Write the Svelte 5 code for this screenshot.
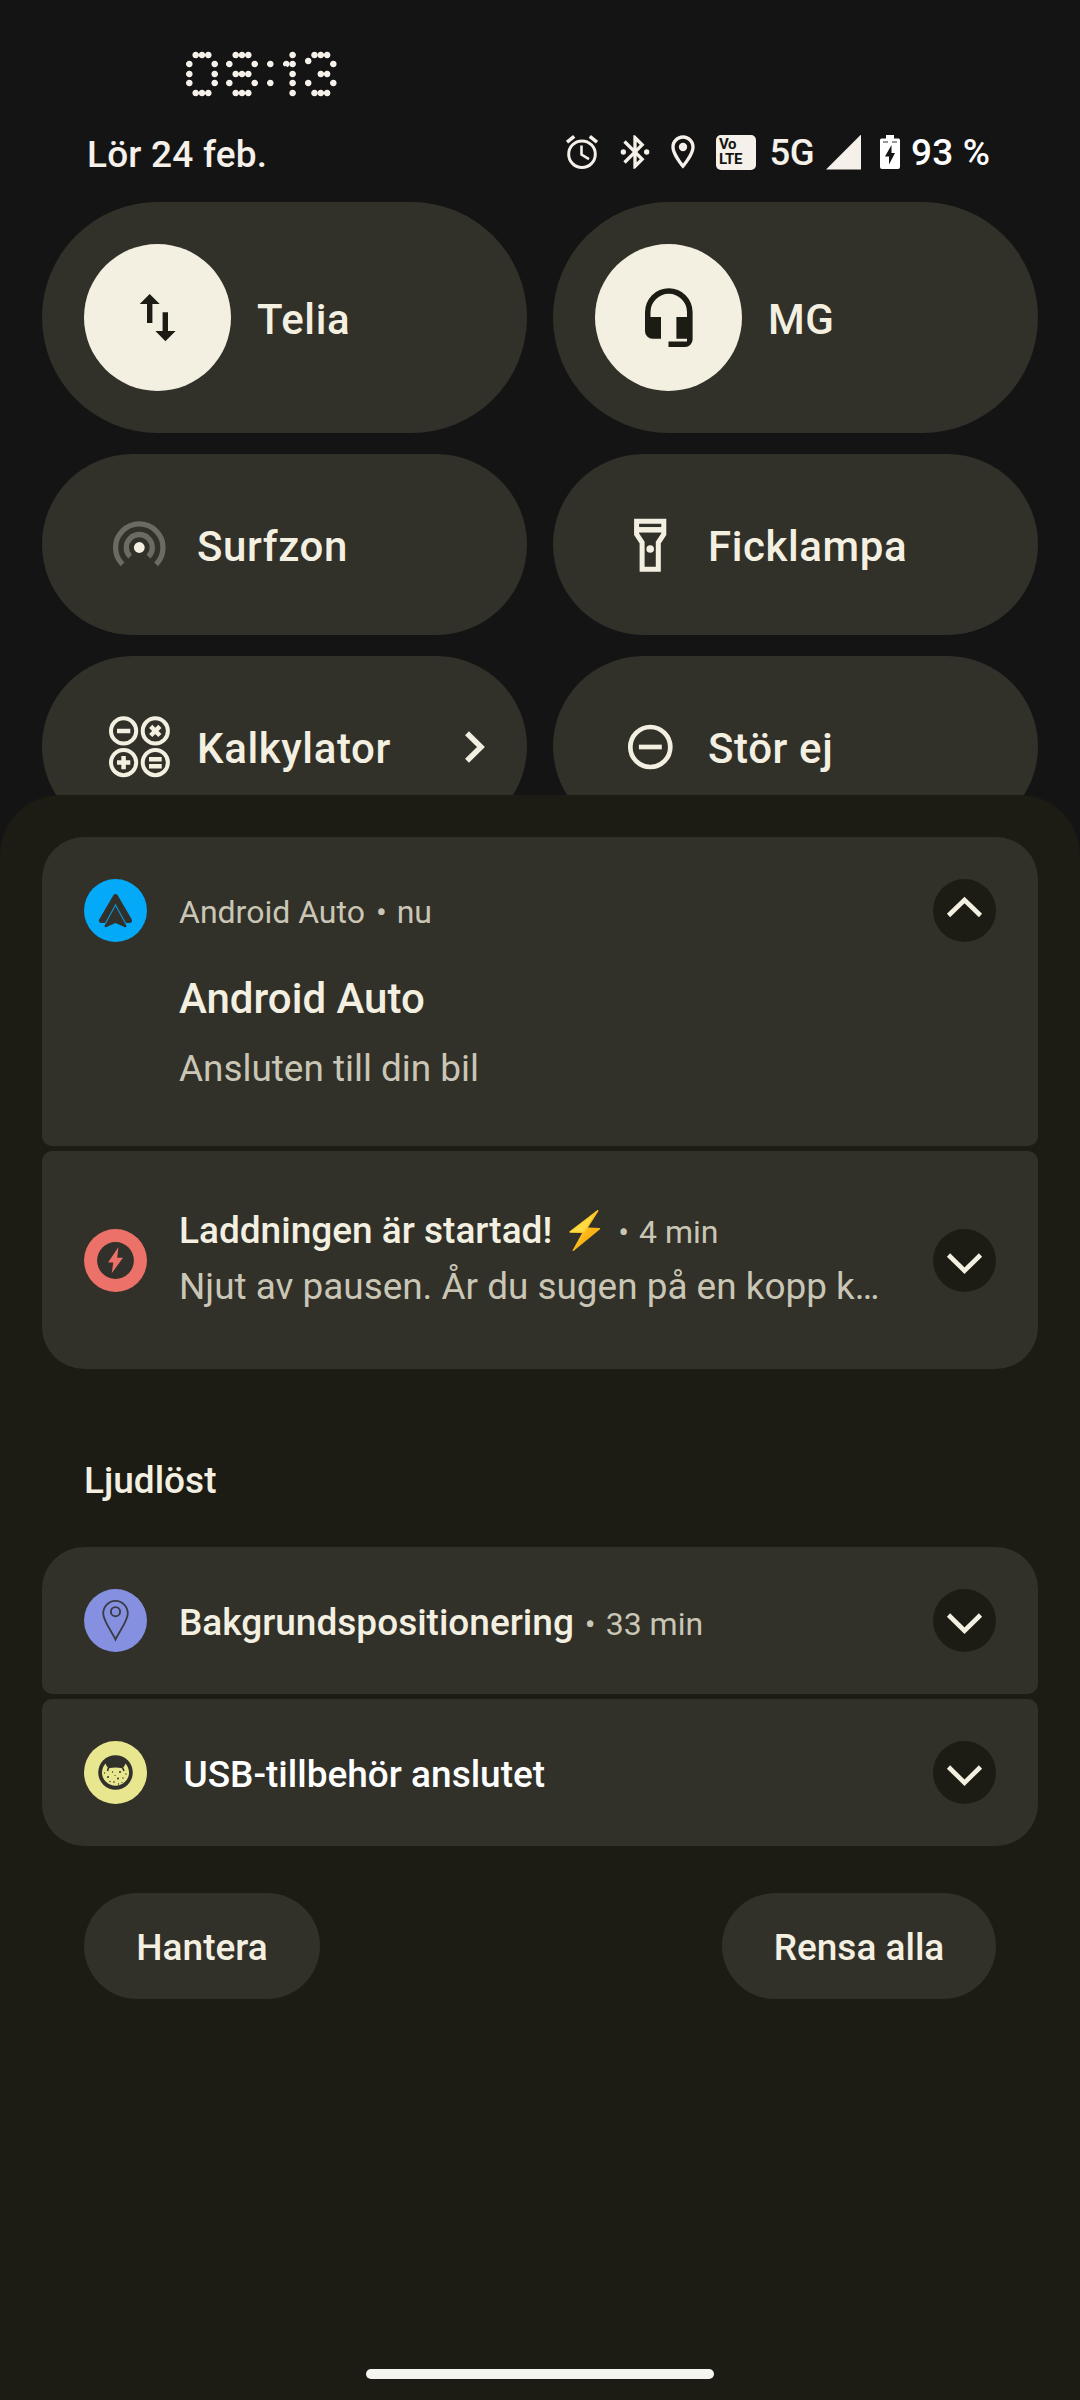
<script lang="ts">
    // Lit dots of the clock display, as [x, y] centres inside the clock box.
    const dots: number[][] = [
        // 0
        [10.7, 5], [17, 5], [23.3, 5], [4.3, 14], [29.7, 14], [4.3, 24], [29.7, 24],
        [4.3, 33], [29.7, 33], [10.7, 43], [17, 43], [23.3, 43],
        // 8
        [50.7, 5], [57, 5], [63.3, 5], [44.3, 14], [69.7, 14], [50.7, 24], [57, 24], [63.3, 24],
        [44.3, 33], [69.7, 33], [50.7, 43], [57, 43], [63.3, 43],
        // colon
        [85.3, 14], [85.3, 33],
        // 1
        [107.6, 5], [101.3, 14], [107.6, 14], [107.6, 24], [107.6, 33], [107.6, 43],
        // 3
        [129.5, 5], [135.8, 5], [142.1, 5], [123.2, 11], [148.3, 14], [135.8, 24], [142.1, 24],
        [123.2, 33], [148.3, 33], [129.5, 43], [135.8, 43], [142.1, 43]
    ];
    const dotFill = dots
        .map(([x, y]) => `radial-gradient(circle at ${x}px ${y}px, #f5f0e9 2.8px, transparent 3.7px)`)
        .join(', ');

    let expanded: boolean = $state(true);
</script>

{#snippet chevron(up: boolean)}
    <button type="button" class="expand" aria-label={up ? 'Minimera' : 'Expandera'} onclick={() => { if (up) expanded = !expanded; }}>
        <svg viewBox="0 0 63 63" fill="none" stroke="#f4f0e1" stroke-width="4.6">
            {#if up}
                <path d="M15.5 36.5 31.5 21l16 15.5" />
            {:else}
                <path d="M15.5 26 31.5 41.7l16-15.7" />
            {/if}
        </svg>
    </button>
{/snippet}

<div class="screen">
    <header>
        <div class="clock" style="background-image: {dotFill}">0<span class="eight">8</span><span class="colon">:</span><span class="one">1</span>3</div>
        <div class="status">
            <span class="date">Lör 24 feb.</span>
            <svg class="alarm" viewBox="0 0 32 34" fill="none" stroke="#f5f0e9" stroke-width="3">
                <circle cx="16" cy="19.2" r="13.3" />
                <path d="M15.5 10.5v9l7.5 4.6" stroke-width="2.6" />
                <path d="M1 7.2 8.2 1.4M23.8 1.4 31 7.2" stroke-width="3.6" />
            </svg>
            <svg class="bluetooth" viewBox="0 0 24 24" fill="#f5f0e9">
                <path fill-rule="evenodd" d="M17.71 7.71 12 2h-1v7.59L6.41 5 5 6.41 10.59 12 5 17.59 6.41 19 11 14.41V22h1l5.71-5.71-4.3-4.29zM13 5.83l1.88 1.88L13 9.59zm1.88 10.46L13 18.17v-3.76z" />
                <circle cx="5" cy="12" r="1.6" />
                <circle cx="19" cy="12" r="1.6" />
            </svg>
            <svg class="pin" viewBox="0 0 24 24" fill="#f5f0e9">
                <path fill-rule="evenodd" d="M12 2C8.13 2 5 5.13 5 9c0 5.25 7 13 7 13s7-7.75 7-13c0-3.87-3.13-7-7-7zM7 9c0-2.76 2.24-5 5-5s5 2.24 5 5c0 2.88-2.88 7.19-5 9.88C9.92 16.21 7 11.85 7 9z" />
                <circle cx="12" cy="9" r="2.5" />
            </svg>
            <span class="volte">Vo<br />LTE</span>
            <span class="network">5G</span>
            <svg class="signal" viewBox="0 0 36 36"><path d="M36 0v36H0z" fill="#f5f0e9" /></svg>
            <svg class="battery" viewBox="0 0 20 34">
                <path d="M6 0h8v3.5h4.5A1.5 1.5 0 0 1 20 5v27a2 2 0 0 1-2 2H2a2 2 0 0 1-2-2V5a1.5 1.5 0 0 1 1.5-1.5H6z" fill="#fff" />
                <path d="M3 7h5M12 7h5" stroke="#777" stroke-width="1.3" />
                <path d="M11.5 10 5 21.5h4v8L15 18h-3.5z" fill="#141414" />
            </svg>
            <span class="percent">93 %</span>
        </div>
    </header>

    <section class="tiles">
        <button type="button" class="tile big">
            <span class="disc">
                <svg viewBox="0 0 63 63" fill="#1c1c14">
                    <path d="M23.7 8 33.7 18h-7.3v19H21V18h-7.3z" />
                    <path d="M39.4 55.2 29.4 45h7.2V26.2h5.4V45h7.6z" />
                </svg>
            </span>
            <span class="label">Telia</span>
        </button>
        <button type="button" class="tile big">
            <span class="disc">
                <svg viewBox="0 0 63 63" fill="#1c1c14">
                    <path d="M8 26.1a23.8 23.8 0 0 1 47.6 0V53.5a7.5 7.5 0 0 1-7.5 7.5H31.5v-5.5H50v-2.7H39.4V31H50V26.1a18.2 18.2 0 0 0-36.5 0V31H24v21.8h-8.5a7.5 7.5 0 0 1-7.5-7.5z" />
                </svg>
            </span>
            <span class="label">MG</span>
        </button>
        <button type="button" class="tile">
            <svg class="icon" viewBox="0 0 68 68" fill="none" stroke="#6c6b62" stroke-width="5.3">
                <path d="M17.5 53.3A23.7 23.7 0 1 1 51.1 53.3" />
                <path d="M25.1 45.7A13 13 0 1 1 43.5 45.7" />
                <circle cx="34.3" cy="36.5" r="5.4" fill="#f4f0e1" stroke="none" />
            </svg>
            <span class="label">Surfzon</span>
        </button>
        <button type="button" class="tile">
            <svg class="icon" viewBox="0 0 68 68" fill="none" stroke="#f4f0e1" stroke-width="5">
                <path d="M20.6 10.2h27.2v13l-5.5 8.3v26.7H26.1V31.5l-5.5-8.3z" />
                <path d="M18.5 18.8h31.5" stroke-width="5.5" />
                <circle cx="34.2" cy="38" r="3.8" fill="#f4f0e1" stroke="none" />
            </svg>
            <span class="label">Ficklampa</span>
        </button>
        <button type="button" class="tile">
            <svg class="icon" viewBox="0 0 68 68" fill="none" stroke="#f4f0e1" stroke-width="4">
                <circle cx="18.6" cy="17.9" r="12.6" />
                <circle cx="50.3" cy="17.9" r="12.6" />
                <circle cx="18.6" cy="49.6" r="12.6" />
                <circle cx="50.3" cy="49.6" r="12.6" />
                <path stroke-width="4.5" d="M12 17.9h13.3M45.7 13.3l9.2 9.2M54.9 13.3l-9.2 9.2M12 49.6h13.3M18.6 43v13.3M44 46.2h12.7M44 53.2h12.7" />
            </svg>
            <span class="label">Kalkylator</span>
            <svg class="go" viewBox="0 0 20 32" fill="none" stroke="#f4f0e1" stroke-width="5.5"><path d="M2 2.2 16 16 2 29.8" /></svg>
        </button>
        <button type="button" class="tile">
            <svg class="icon" viewBox="0 0 68 68" fill="none" stroke="#f4f0e1" stroke-width="4.7">
                <circle cx="34.3" cy="34" r="20" />
                <path d="M22.9 34h22.9" />
            </svg>
            <span class="label">Stör ej</span>
        </button>
    </section>

    <main class="shade">
        <div class="group">
            <article class="card open">
                <svg class="app" viewBox="0 0 63 63">
                    <circle cx="31.5" cy="31.5" r="31.5" fill="#04a9f8" />
                    <path d="M31.5 17.5 17.5 41.5h28z" fill="#31302a" stroke="#31302a" stroke-width="5" stroke-linejoin="round" />
                    <path d="M31.5 44H43v6H20v-6z" fill="#04a9f8" />
                    <path d="M31.5 44 22 48.2q-2 .3-1.3-1.7L31.5 26l10.8 20.5q.7 2-1.3 1.7z" fill="#31302a" />
                    <path d="M21.5 44.3 31.5 26l10 18.3" fill="none" stroke="#0b93d6" stroke-width="1.2" />
                </svg>
                <div class="content">
                    <div class="app-line">Android Auto<span class="bullet">•</span>nu</div>
                    {#if expanded}
                        <div class="big-title">Android Auto</div>
                        <div class="text">Ansluten till din bil</div>
                    {/if}
                </div>
                {@render chevron(true)}
            </article>
            <article class="card two-line">
                <svg class="app" viewBox="0 0 63 63">
                    <circle cx="31.5" cy="31.5" r="31.5" fill="#ec7168" />
                    <circle cx="31.5" cy="31.5" r="18.4" fill="#31302a" />
                    <path d="M34.5 18 24 33.5h5.3L27.7 44.3 39 28.7h-5.8z" fill="#ec7168" />
                </svg>
                <div class="content">
                    <div class="title-line">
                        <span class="title">Laddningen är startad!</span>
                        <svg class="bolt" viewBox="0 0 34 43">
                            <defs>
                                <linearGradient id="bolt" x1="0" y1="0" x2="1" y2="1">
                                    <stop offset=".25" stop-color="#ffe13c" />
                                    <stop offset=".6" stop-color="#fcb316" />
                                </linearGradient>
                            </defs>
                            <path d="M29.5 1 1.5 22.6q-.8 1 .6 1.1l12 .4L4.5 41.5q.2 1 1.3.2L32 20.3q.8-1.2-.6-1.3L20 18.6 30.5 2q0-1.3-1-1z" fill="url(#bolt)" />
                            <path d="M25.5 6 4.5 22.5l12 .2z" fill="#ffe352" opacity=".7" />
                        </svg>
                        <span class="age"><span class="bullet">•</span>4 min</span>
                    </div>
                    <div class="text">Njut av pausen. År du sugen på en kopp k…</div>
                </div>
                {@render chevron(false)}
            </article>
        </div>

        <h2>Ljudlöst</h2>

        <div class="group">
            <article class="card single">
                <svg class="app" viewBox="0 0 63 63">
                    <circle cx="31.5" cy="31.5" r="31.5" fill="#8591e0" />
                    <path d="M31.5 50.5C28 43 19.2 31.5 19.2 24.5a12.3 12.6 0 0 1 24.6 0C43.8 31.5 35 43 31.5 50.5z" fill="none" stroke="#3a3b45" stroke-width="1.8" />
                    <circle cx="31.5" cy="22.7" r="4.6" fill="none" stroke="#3a3b45" stroke-width="1.9" />
                </svg>
                <div class="content title-line">
                    <span class="title">Bakgrundspositionering</span>
                    <span class="age"><span class="bullet">•</span>33 min</span>
                </div>
                {@render chevron(false)}
            </article>
            <article class="card single">
                <svg class="app" viewBox="0 0 63 63">
                    <circle cx="31.5" cy="31.5" r="31.5" fill="#e8e78f" />
                    <circle cx="31.5" cy="31.5" r="17.3" fill="#31302a" />
                    <path d="M21.5 22.5q-4 5-3.5 10.5a13.6 13.3 0 0 0 27 0q.5-5.5-3.5-10.5-.5 2-2.5 4-1 .8-1 .8-6.5-1.5-13 0l-1-.8q-2-2-2.5-4z" fill="#e8e78f" />
                    <path d="M24.5 26.5 23.5 30M38.5 26.5 40 30" stroke="#31302a" stroke-width="1.6" />
                    <g fill="#31302a">
                        <circle cx="24" cy="36" r="1" /><circle cx="34" cy="37.5" r="1" /><circle cx="36" cy="31" r="1" />
                        <circle cx="28.5" cy="31" r=".7" /><circle cx="20.5" cy="32" r=".7" /><circle cx="42" cy="33" r=".7" />
                        <circle cx="30" cy="41" r=".8" /><circle cx="39" cy="37" r=".7" /><circle cx="26" cy="40.5" r=".7" />
                        <circle cx="34.5" cy="43" r=".7" /><circle cx="31" cy="34.5" r=".6" /><circle cx="38" cy="41.5" r=".6" />
                    </g>
                </svg>
                <div class="content title-line usb">
                    <span class="title">USB-tillbehör anslutet</span>
                </div>
                {@render chevron(false)}
            </article>
        </div>

        <div class="actions">
            <button type="button" class="manage">Hantera</button>
            <button type="button" class="clear">Rensa alla</button>
        </div>

        <div class="home-bar"></div>
    </main>
</div>

<style>
    :global(body) {
        background: #141414;
    }

    .screen {
        width: 1080px;
        height: 2400px;
        display: flex;
        flex-direction: column;
        overflow: hidden;
        background: #141414;
        color: #f4f0e1;
        font-family: Roboto, "Noto Sans", sans-serif;
    }

    svg {
        display: block;
        flex: none;
    }

    button {
        border: none;
        margin: 0;
        padding: 0;
        color: inherit;
        font: inherit;
        text-align: left;
        cursor: pointer;
    }

    header {
        height: 202px;
        box-sizing: border-box;
        padding: 50px 0 0 185px;
        flex: none;
    }

    /* The digits act as a mask: only the dots behind them show. */
    .clock {
        width: 156px;
        height: 48px;
        font-size: 60px;
        font-weight: 500;
        letter-spacing: 6.3px;
        line-height: 48px;
        white-space: nowrap;
        color: transparent;
        background-clip: text;
        -webkit-background-clip: text;
        -webkit-text-stroke: 8px transparent;
    }

    .clock .eight {
        letter-spacing: 4px;
    }

    /* Raised, since the colon dots sit higher than the glyph's own. */
    .clock .colon {
        letter-spacing: -4px;
        line-height: 0;
        vertical-align: 5px;
        -webkit-text-stroke-width: 12px;
    }

    .clock .one {
        letter-spacing: -4px;
    }

    .status {
        display: flex;
        align-items: center;
        height: 48px;
        margin: 30px 0 0 -98px;
        color: #f5f0e9;
        font-size: 37px;
        white-space: nowrap;
    }

    .date {
        width: 479px;
        padding-top: 4px;
        font-weight: 500;
        letter-spacing: 0.2px;
    }

    .alarm {
        width: 32px;
        height: 34px;
    }

    .bluetooth {
        width: 40px;
        height: 40px;
        margin-left: 16.5px;
    }

    .pin {
        width: 40px;
        height: 40px;
        margin-left: 8px;
    }

    .volte {
        box-sizing: border-box;
        width: 40px;
        height: 35px;
        margin-left: 13.5px;
        padding: 2px 0 0 3px;
        border-radius: 5px;
        background: #f5f0e9;
        color: #141414;
        font-size: 15px;
        font-weight: 700;
        letter-spacing: -0.4px;
        line-height: 15.5px;
    }

    .network {
        width: 56px;
        margin-left: 13.5px;
        font-size: 36.5px;
        font-weight: 500;
        letter-spacing: -0.5px;
    }

    .signal {
        width: 35.5px;
        height: 35.5px;
        margin-right: 19px;
    }

    .battery {
        width: 20px;
        height: 34px;
        margin-right: 11px;
    }

    .percent {
        color: #fff;
        font-weight: 500;
        letter-spacing: 0.2px;
    }

    .tiles {
        display: grid;
        grid-template-columns: 485px 485px;
        grid-template-rows: 231px 181px 181px;
        column-gap: 26px;
        row-gap: 21px;
        height: 593px;
        padding: 0 42px;
        flex: none;
    }

    .tile {
        display: flex;
        align-items: center;
        padding: 0 42px 0 63px;
        border-radius: 116px;
        background: #313029;
    }

    .tile.big {
        padding-left: 42px;
    }

    .disc {
        display: flex;
        align-items: center;
        justify-content: center;
        width: 147px;
        height: 147px;
        margin-right: 26px;
        border-radius: 50%;
        background: #f4f0e1;
    }

    .disc svg {
        width: 63px;
        height: 63px;
    }

    .icon {
        width: 68px;
        height: 68px;
        margin-right: 24px;
    }

    .label {
        flex: 1;
        padding-top: 4px;
        font-size: 42px;
        font-weight: 500;
        letter-spacing: 0.6px;
        line-height: 50px;
    }

    .go {
        width: 20px;
        height: 32px;
    }

    .shade {
        position: relative;
        display: flex;
        flex-direction: column;
        flex: 1;
        padding: 42px 42px 0;
        border-radius: 60px 60px 0 0;
        background: #1c1c14;
    }

    .group {
        display: flex;
        flex-direction: column;
        gap: 5px;
    }

    .card {
        display: flex;
        align-items: center;
        box-sizing: border-box;
        padding: 0 42px;
        border-radius: 10px;
        background: #313029;
    }

    .card:first-child {
        border-radius: 42px 42px 10px 10px;
    }

    .card:last-child {
        border-radius: 10px 10px 42px 42px;
    }

    .open {
        align-items: flex-start;
        height: 309px;
        padding-top: 42px;
    }

    .two-line {
        height: 218px;
    }

    .single {
        height: 147px;
    }

    .app {
        width: 63px;
        height: 63px;
    }

    .content {
        flex: 1;
        min-width: 0;
        padding-left: 32px;
        white-space: nowrap;
    }

    .app-line {
        padding-top: 2px;
        height: 61px;
        color: #cac6b5;
        font-size: 32px;
        line-height: 63px;
    }

    .bullet {
        margin: 0 10px 0 11px;
    }

    .big-title {
        margin-top: 32px;
        font-size: 42px;
        font-weight: 500;
        line-height: 50px;
    }

    .text {
        margin-top: 23px;
        color: #cac6b5;
        font-size: 36.9px;
        line-height: 44px;
    }

    .two-line .content {
        padding-bottom: 4px;
    }

    .two-line .text {
        margin-top: 0;
        line-height: 54px;
    }

    .title-line {
        display: flex;
        align-items: baseline;
        line-height: 56px;
    }

    .title {
        font-size: 37px;
        font-weight: 500;
    }

    .single .title-line {
        padding-top: 5px;
    }

    .single .usb {
        padding: 4px 0 0 36.5px;
        color: #fff;
    }

    .bolt {
        width: 34px;
        height: 43px;
        align-self: center;
        margin: -2px 5.5px 0 15.5px;
    }

    .age {
        color: #cac6b5;
        font-size: 32px;
    }

    .expand {
        width: 63px;
        height: 63px;
        border-radius: 50%;
        background: #1c1c14;
    }

    h2 {
        margin: 90px 0 0 42px;
        height: 88px;
        font-size: 37px;
        font-weight: 500;
        line-height: 44px;
    }

    .actions {
        display: flex;
        justify-content: space-between;
        padding: 47px 42px 0;
    }

    .actions button {
        height: 106px;
        padding-top: 3px;
        border-radius: 53px;
        background: #313029;
        font-size: 37px;
        font-weight: 500;
        text-align: center;
    }

    .manage {
        width: 236px;
    }

    .clear {
        width: 274px;
    }

    .home-bar {
        width: 348px;
        height: 10px;
        margin: auto auto 21px;
        border-radius: 5px;
        background: #f5f5f0;
    }
</style>
